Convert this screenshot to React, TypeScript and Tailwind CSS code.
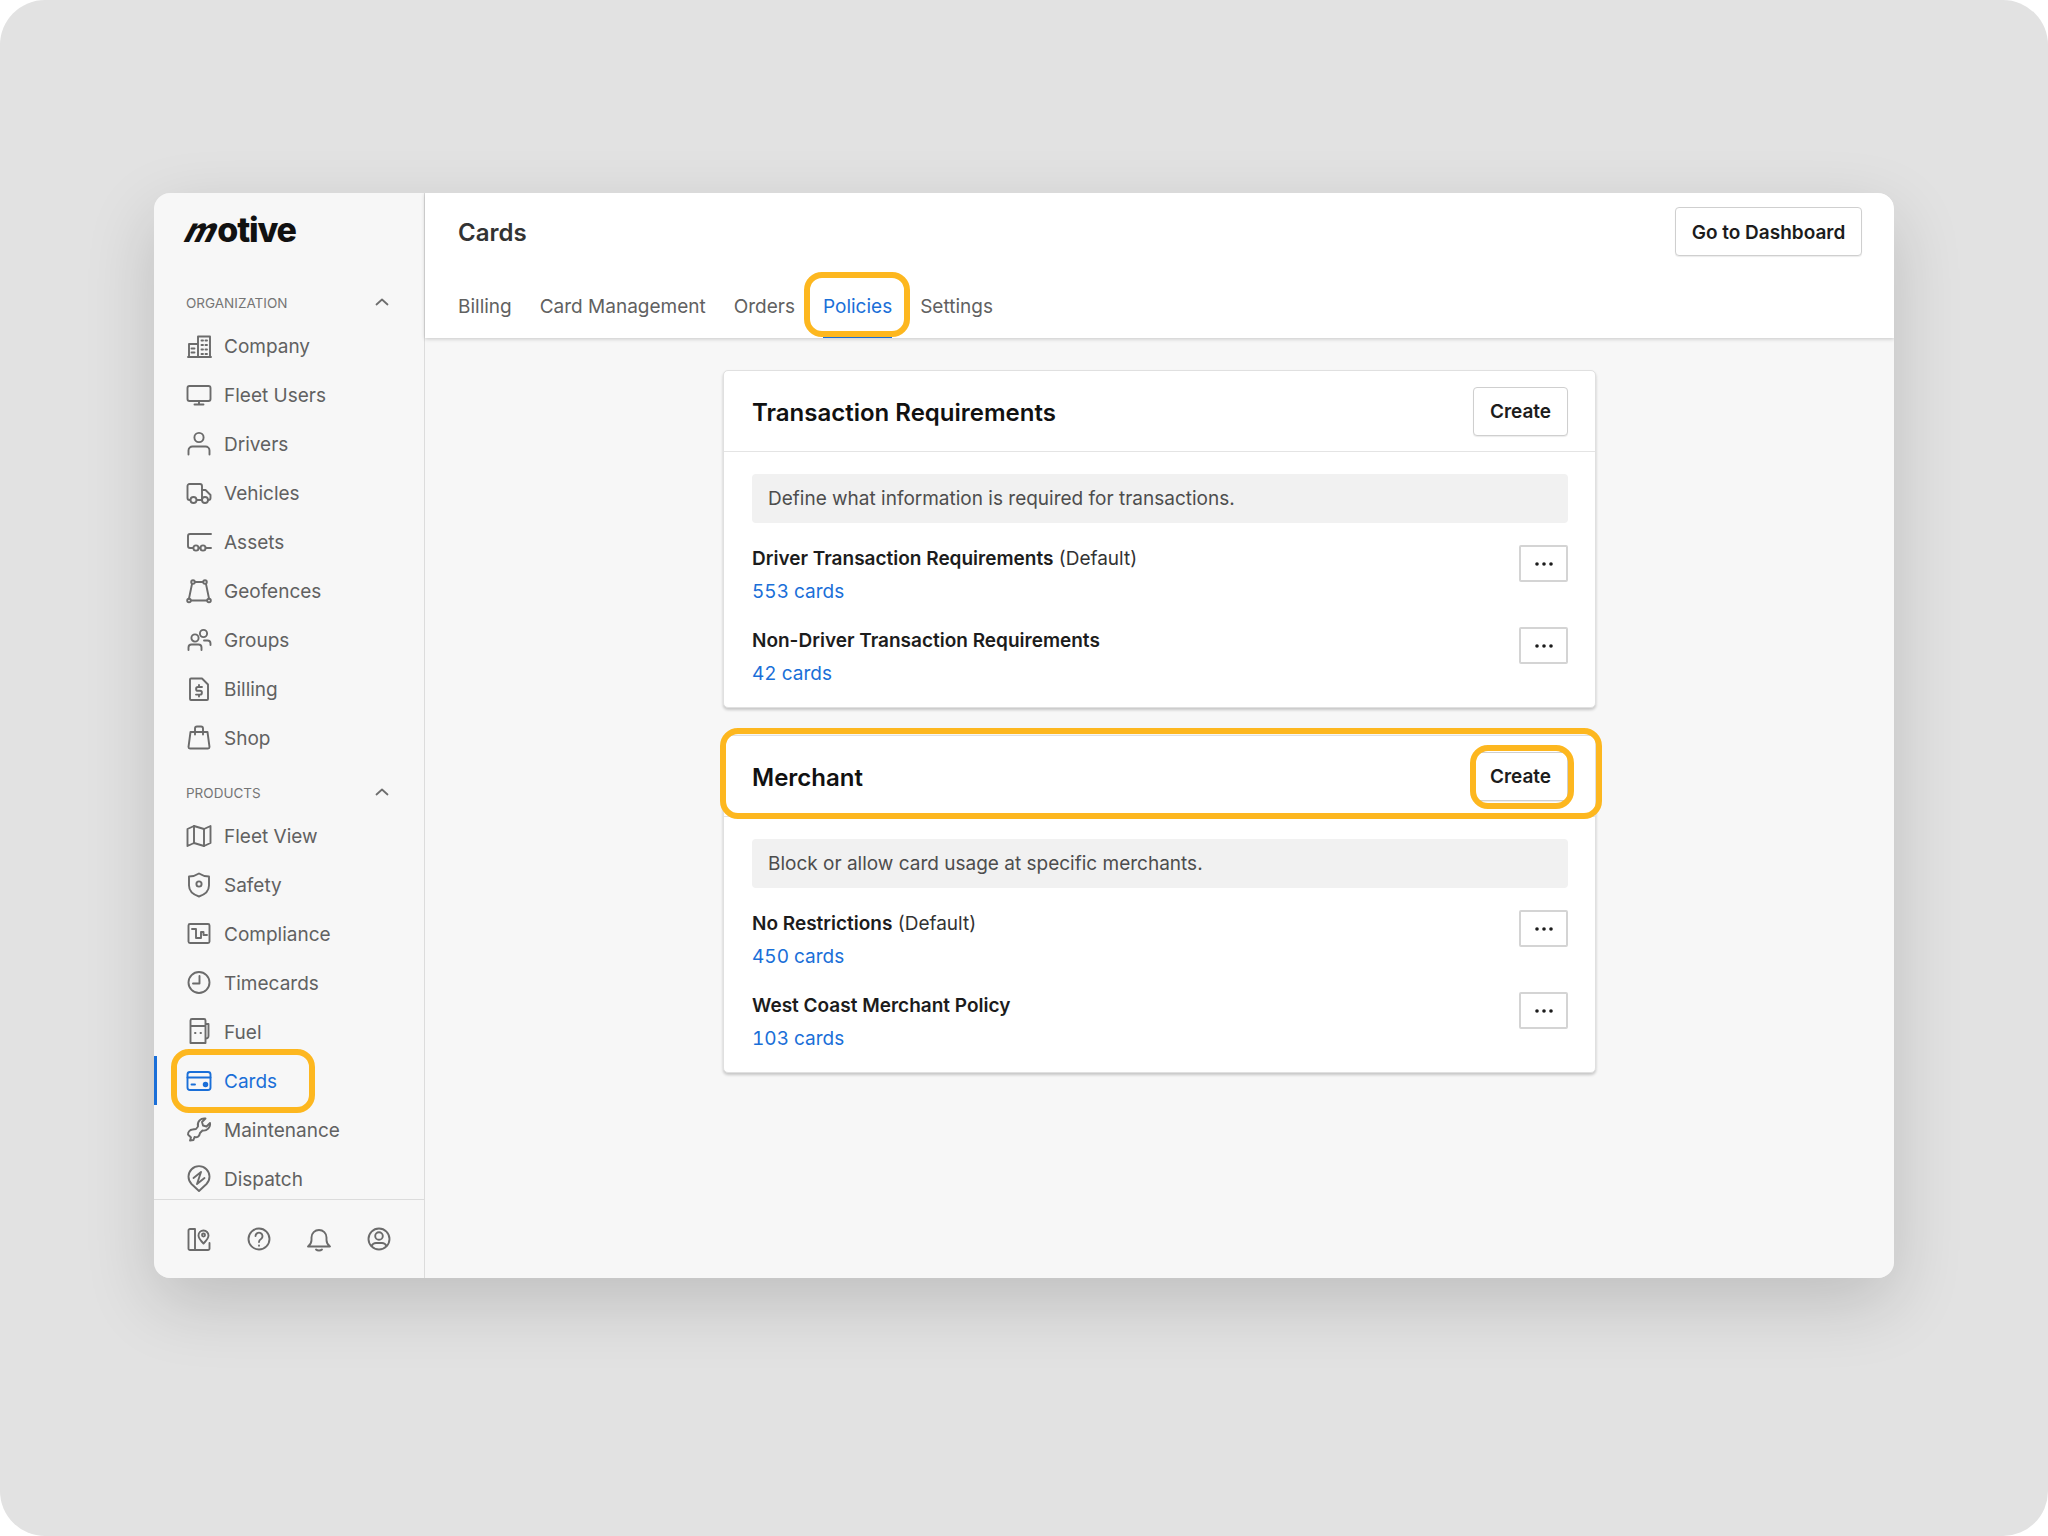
import type { ReactNode } from "react";

// All nav icons share a 28x28 box, stroked with currentColor
function Icon({ children, className = "" }: { children: ReactNode; className?: string }) {
  return (
    <svg
      viewBox="0 0 28 28"
      fill="none"
      stroke="currentColor"
      strokeWidth="1.9"
      strokeLinecap="round"
      strokeLinejoin="round"
      className={`h-7 w-7 shrink-0 ${className}`}
    >
      {children}
    </svg>
  );
}

const icons: Record<string, ReactNode> = {
  Company: (
    <>
      <path d="M13 25V4.500h12V25H13ZM13 12H4v13h9M3 25h23" />
      <path d="M16.500 8.500h1.500M20.500 8.500H22M16.500 13h1.500M20.500 13H22M16.500 17.500h1.500M20.500 17.500H22M16.500 22h1.500M20.500 22H22M6.500 16.500h3M6.500 20.500h3" />
    </>
  ),
  "Fleet Users": (
    <>
      <rect x="2.500" y="5" width="23" height="15" rx="2" />
      <path d="M14 20v3.500M9.500 23.500h9" />
    </>
  ),
  Drivers: (
    <>
      <circle cx="14" cy="7.500" r="4.600" />
      <path d="M3.500 24.500v-4a4 4 0 0 1 4-4h13a4 4 0 0 1 4 4v4" />
    </>
  ),
  Vehicles: (
    <>
      <path d="M5 21H4.500a2 2 0 0 1-2-2V7a2 2 0 0 1 2-2H15a2 2 0 0 1 2 2v14M12 21h5" />
      <path d="M17 11h3.500l5 5v3a2 2 0 0 1-2 2h-.5" />
      <circle cx="8.500" cy="21" r="3" />
      <circle cx="20" cy="21" r="3" />
    </>
  ),
  Assets: (
    <>
      <path d="M26 6H5a2 2 0 0 0-2 2v10a2 2 0 0 0 2 2h3M13.500 20h2M20.500 20H26" />
      <circle cx="11" cy="20" r="2.600" />
      <circle cx="18" cy="20" r="2.600" />
    </>
  ),
  Geofences: (
    <>
      <path d="M10 5h8M21 7l3 14.500M22 23.500H6M4 21.500l3-14.500" />
      <circle cx="8" cy="5" r="1.800" />
      <circle cx="20" cy="5" r="1.800" />
      <circle cx="4" cy="23.500" r="1.800" />
      <circle cx="24" cy="23.500" r="1.800" />
    </>
  ),
  Groups: (
    <>
      <circle cx="10" cy="12" r="3.600" />
      <circle cx="18.500" cy="7.500" r="3.600" />
      <path d="M3.500 24v-2.500a3 3 0 0 1 3-3h7a3 3 0 0 1 3 3V24M19 14.500h3.500a3 3 0 0 1 3 3V19" />
    </>
  ),
  Billing: (
    <>
      <path d="M6 3.500h11l6 6V24a1 1 0 0 1-1 1H6a1 1 0 0 1-1-1V4.500a1 1 0 0 1 1-1Z" />
      <path d="M17 12h-4a1.900 1.900 0 0 0 0 3.800h2a1.900 1.900 0 0 1 0 3.800h-4M14 10v2M14 19.600v2" />
    </>
  ),
  Shop: (
    <>
      <path d="M5.500 8h17l2 15a1.500 1.500 0 0 1-1.500 1.500H5A1.500 1.500 0 0 1 3.500 23l2-15Z" />
      <path d="M10 10.500V4.500a2 2 0 0 1 2-2h4a2 2 0 0 1 2 2v6" />
    </>
  ),
  "Fleet View": (
    <>
      <path d="M2.500 7 9 4l10 3 6.500-3v17l-6.500 3-10-3-6.500 3V7Z" />
      <path d="M9 4v17M19 7v17" />
    </>
  ),
  Safety: (
    <>
      <path d="M14 2.500c3 2 6.500 3 10 3v9c0 5.500-4 9-10 11-6-2-10-5.500-10-11v-9c3.500 0 7-1 10-3Z" />
      <circle cx="14" cy="13" r="2.600" />
    </>
  ),
  Compliance: (
    <>
      <rect x="3.500" y="4" width="21" height="19" rx="1.500" />
      <path d="M7 9h4v9h5v-6h2.500v3H22" />
    </>
  ),
  Timecards: (
    <>
      <circle cx="14" cy="13.500" r="10.500" />
      <path d="M14.500 7V14.500H8" />
    </>
  ),
  Fuel: (
    <>
      <path d="M5.500 25V2.500A1.500 1.500 0 0 1 7 1h12a1.500 1.500 0 0 1 1.500 1.500V25h-15ZM5.500 8h15M20.500 6h3v12a2.500 2.500 0 0 1-3 2.500" />
      <path d="M10 15h.5M15.500 15h.5" />
    </>
  ),
  Cards: (
    <>
      <rect x="2.500" y="5" width="23" height="18" rx="2.500" />
      <path d="M2.500 10.500h23M6.500 17.500h3.500" />
      <circle cx="20.500" cy="17.500" r="1.800" fill="currentColor" />
    </>
  ),
  Maintenance: (
    <path d="M25 7l-3.500 3.500-3.500-1-1-3.500 3.500-3.500a6.500 6.500 0 0 0-7.500 8L11 13l-3.500.5a5 5 0 0 0-4.500 5l3 3-1 3 3.500-.5 1-3c2.500 1 5-.5 5.500-4l2.500-2.500A6.500 6.500 0 0 0 25 7Z" />
  ),
  Dispatch: (
    <>
      <path d="M14 26 6.500 19a10.500 10.500 0 1 1 15 0L14 26Z" />
      <path d="M8.500 13 16 7M12 19l7.500-6M16 7l-4 12" />
    </>
  ),
};

function MapBookIcon() {
  return (
    <Icon>
      <path d="M10 4H5a1.500 1.500 0 0 0-1.500 1.500v18A1.500 1.500 0 0 0 5 25h18a1.500 1.500 0 0 0 1.500-1.500V18M10 4v21" />
      <path d="M18.500 18.500c-3-3-5-5-5-8a5 5 0 0 1 10 0c0 3-2 5-5 8Z" />
      <circle cx="18.500" cy="10" r="1.500" />
    </Icon>
  );
}

function HelpIcon() {
  return (
    <Icon>
      <circle cx="14" cy="14" r="10.500" />
      <path d="M10.500 11a3.500 3.500 0 1 1 5.500 3c-1.300.8-2 1.500-2 3" />
      <path d="M14 20.500v.2" />
    </Icon>
  );
}

function BellIcon() {
  return (
    <Icon>
      <path d="M3 21.500c2-1.500 3.500-3 3.500-6.500v-2.500a7.500 7.500 0 0 1 15 0V15c0 3.500 1.500 5 3.500 6.500H3Z" />
      <path d="M11 24.500c1.500 1.300 4.500 1.300 6 0" />
    </Icon>
  );
}

function UserCircleIcon() {
  return (
    <Icon>
      <circle cx="14" cy="14" r="10.500" />
      <circle cx="14" cy="11" r="3.800" />
      <path d="M6.500 21c1-2 2.500-3 4.500-3h6c2 0 3.500 1 4.500 3" />
    </Icon>
  );
}

function ChevronUp() {
  return (
    <svg viewBox="0 0 14 8" fill="none" stroke="currentColor" strokeWidth="1.800" strokeLinecap="round" strokeLinejoin="round" className="h-2 w-3.5 text-[#6e6e6e]">
      <path d="M1.500 6.500 7 1.500l5.500 5" />
    </svg>
  );
}

function SectionLabel({ label }: { label: string }) {
  return (
    <div className="flex h-[49px] items-start justify-between pt-[22px] pl-8 pr-[35px] text-[13.500px] leading-[18px] text-[#757575]">
      <span>{label}</span>
      <span className="pt-[4px]">
        <ChevronUp />
      </span>
    </div>
  );
}

function NavItem({ label, active = false }: { label: string; active?: boolean }) {
  return (
    <div
      className={`flex h-[49px] items-center gap-[11px] border-l-[3px] pl-[28px] text-[19px] ${
        active ? "border-[#1a6fd8] text-[#1a6fd8]" : "border-transparent text-[#616161]"
      }`}
    >
      <Icon className={active ? "text-[#1a6fd8]" : "text-[#6b6b6b]"}>{icons[label]}</Icon>
      <span className="pt-1">{label}</span>
    </div>
  );
}

function Sidebar() {
  const organization = ["Company", "Fleet Users", "Drivers", "Vehicles", "Assets", "Geofences", "Groups", "Billing", "Shop"];
  const products = ["Fleet View", "Safety", "Compliance", "Timecards", "Fuel", "Cards", "Maintenance", "Dispatch"];

  return (
    <aside className="flex w-[271px] shrink-0 flex-col border-r border-[#dcdcdc] bg-[#f7f7f7]">
      <div className="flex h-[1006px] flex-col overflow-hidden">
        {/* logo */}
        <div className="h-[25px] shrink-0" />
        <div className="h-[54px] shrink-0 pl-[33px] text-[34px] leading-[24px] font-extrabold tracking-[-1.2px] text-[#111111]">
          <span className="inline-block -skew-x-[28deg] scale-x-[0.95]">m</span>otive
        </div>
        <div className="shrink-0">
          <SectionLabel label="ORGANIZATION" />
          {organization.map((item) => (
            <NavItem key={item} label={item} />
          ))}
          <SectionLabel label="PRODUCTS" />
          {products.map((item) => (
            <NavItem key={item} label={item} active={item === "Cards"} />
          ))}
        </div>
      </div>
      <div className="flex flex-1 items-start gap-8 border-t border-[#dcdcdc] pt-[25px] pl-[31px] text-[#6b6b6b]">
        <MapBookIcon />
        <HelpIcon />
        <BellIcon />
        <UserCircleIcon />
      </div>
    </aside>
  );
}

function OutlineButton({ children, className = "" }: { children: ReactNode; className?: string }) {
  return (
    <button className={`flex items-center justify-center rounded-[4px] border border-[#cfcfcf] bg-white pt-[3px] text-[19px] font-semibold text-[#1c1c1c] shadow-[0_1px_1px_rgba(0,0,0,0.08)] ${className}`}>
      {children}
    </button>
  );
}

function MoreButton() {
  return (
    <button className="flex h-[37px] w-[49px] shrink-0 items-center justify-center rounded-[2px] border-2 border-[#d4d4d4] bg-white">
      <svg viewBox="0 0 18 4" className="h-1 w-[18px] fill-[#1c1c1c]">
        <circle cx="2" cy="2" r="1.800" />
        <circle cx="9" cy="2" r="1.800" />
        <circle cx="16" cy="2" r="1.800" />
      </svg>
    </button>
  );
}

type Policy = { name: string; isDefault?: boolean; count: string };

function PolicyRow({ policy }: { policy: Policy }) {
  return (
    <div className="flex items-start justify-between">
      <div className="text-[19px] leading-[33px]">
        <div className="text-[#1c1c1c]">
          <span className="font-semibold">{policy.name}</span>
          {policy.isDefault && <span className="text-[#333333]"> (Default)</span>}
        </div>
        <div className="text-[#1a6fd8] tabular-nums">{policy.count}</div>
      </div>
      <div className="pt-[3px]">
        <MoreButton />
      </div>
    </div>
  );
}

function PolicyCard({ title, description, policies }: { title: string; description: string; policies: Policy[] }) {
  return (
    <section className="h-[338px] rounded-[5px] border border-[#e0e0e0] bg-white shadow-[0_2px_3px_rgba(0,0,0,0.2)]">
      <div className="flex h-[81px] items-center justify-between border-b border-[#e4e4e4] pr-[27px] pl-[28px]">
        <h2 className="pt-1 text-[24px] font-semibold text-[#111111]">{title}</h2>
        <OutlineButton className="h-[49px] w-[95px]">Create</OutlineButton>
      </div>
      <div className="flex flex-col gap-4 pt-[22px] pr-[27px] pl-[28px]">
        <div className="mb-[3px] flex h-[49px] items-center rounded-[4px] bg-[#f1f1f1] px-4 pt-0.5 text-[19px] text-[#4d4d4d]">{description}</div>
        {policies.map((policy) => (
          <PolicyRow key={policy.name} policy={policy} />
        ))}
      </div>
    </section>
  );
}

function Header() {
  const tabs = ["Billing", "Card Management", "Orders", "Policies", "Settings"];

  return (
    <header className="h-[145px] shrink-0 bg-white shadow-[0_1px_4px_rgba(0,0,0,0.2)]">
      <div className="flex items-center justify-between pt-[14px] pr-8 pl-[33px]">
        <h1 className="pt-0.5 text-[24px] font-semibold text-[#333333]">Cards</h1>
        <OutlineButton className="h-[49px] w-[187px]">Go to Dashboard</OutlineButton>
      </div>
      <nav className="mt-[18px] flex h-[64px] gap-[28px] pl-[33px] text-[19px] text-[#616161]">
        {tabs.map((tab) => (
          <div
            key={tab}
            className={`flex h-full items-center border-b-[3px] pt-[5px] ${
              tab === "Policies" ? "border-[#1a6fd8] text-[#1a6fd8]" : "border-transparent"
            }`}
          >
            {tab}
          </div>
        ))}
      </nav>
    </header>
  );
}

export default function App() {
  return (
    <div className="relative h-[1536px] w-[2048px] bg-white font-['Inter',sans-serif]">
      <div className="h-full rounded-[45px] bg-[#e2e2e2] pt-[193px] pl-[154px]">
        <div className="flex h-[1085px] w-[1740px] overflow-hidden rounded-[16px] shadow-[0_24px_70px_rgba(0,0,0,0.16)]">
          <Sidebar />
          <main className="flex flex-1 flex-col bg-[#f7f7f7]">
            <Header />
            <div className="mx-auto flex w-[873px] flex-col gap-[27px] pt-8">
              <PolicyCard
                title="Transaction Requirements"
                description="Define what information is required for transactions."
                policies={[
                  { name: "Driver Transaction Requirements", isDefault: true, count: "553 cards" },
                  { name: "Non-Driver Transaction Requirements", count: "42 cards" },
                ]}
              />
              <PolicyCard
                title="Merchant"
                description="Block or allow card usage at specific merchants."
                policies={[
                  { name: "No Restrictions", isDefault: true, count: "450 cards" },
                  { name: "West Coast Merchant Policy", count: "103 cards" },
                ]}
              />
            </div>
          </main>
        </div>
      </div>

      {/* yellow callouts drawn over the screenshot */}
      <div className="absolute top-[1049px] left-[171px] h-[64px] w-[144px] rounded-[18px] border-[6px] border-[#fdb71f]" />
      <div className="absolute top-[272px] left-[804px] h-[65px] w-[106px] rounded-[18px] border-[6px] border-[#fdb71f]" />
      <div className="absolute top-[728px] left-[720px] h-[91px] w-[882px] rounded-[18px] border-[6px] border-[#fdb71f]" />
      <div className="absolute top-[745px] left-[1470px] h-[64px] w-[104px] rounded-[18px] border-[6px] border-[#fdb71f]" />
    </div>
  );
}
